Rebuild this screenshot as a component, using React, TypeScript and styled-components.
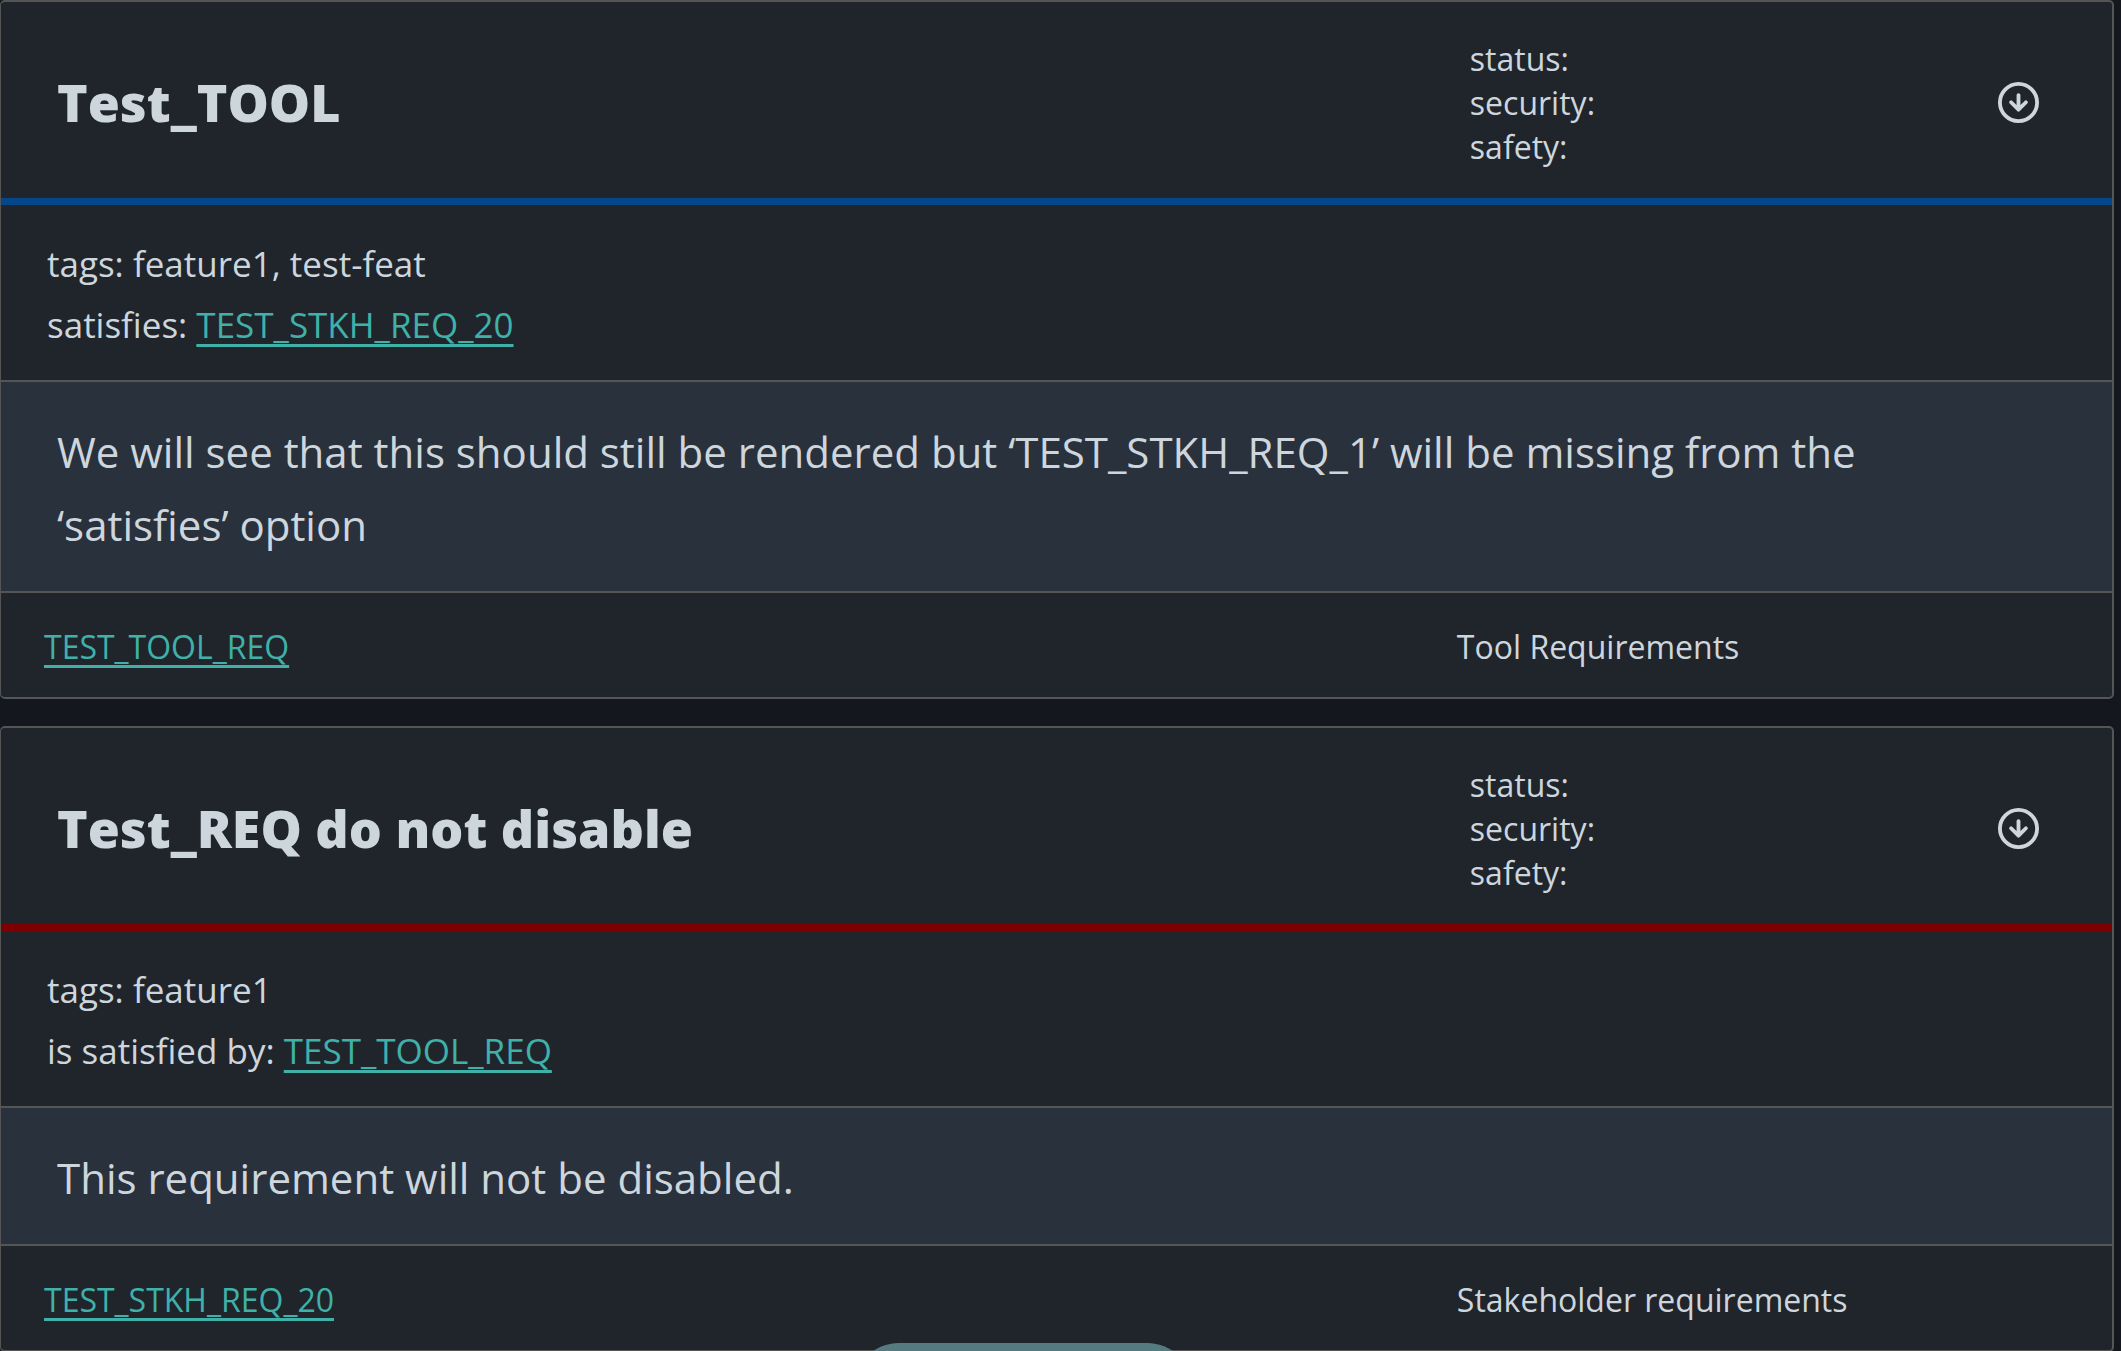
import React from "react";
import styled, { createGlobalStyle } from "styled-components";

const color = {
  page: "#14181e",
  card: "#20252c",
  surface: "#29313d",
  text: "#ced6dd",
  border: "#555555",
  link: "#3fb1a9",
  pill: "#557b81",
};

const GlobalStyle = createGlobalStyle`
  *, *::before, *::after { box-sizing: border-box; }
  body {
    margin: 0;
    overflow: hidden;
    background: ${color.page};
    color: ${color.text};
    font-family: "Segoe UI", "Open Sans", "Noto Sans", sans-serif;
  }
`;

const Page = styled.main`
  display: flex;
  flex-direction: column;
  gap: 27px;
  padding-right: 7px;
`;

const Card = styled.article`
  background: ${color.card};
  border: 2px solid ${color.border};
  border-left-width: 1px;
  border-radius: 5px;
  overflow: hidden;
`;

const Row = styled.div`
  display: grid;
  grid-template-columns: minmax(0, 20fr) minmax(0, 9fr);
  align-items: center;
`;

const Header = styled(Row)<{ $accent: string }>`
  height: 203px;
  padding-top: 5px;
  border-bottom: 7px solid ${(p) => p.$accent};
`;

const Title = styled.h2`
  margin: 0;
  padding: 0 56px 2px;
  font-size: 52px;
  line-height: 76px;
  font-weight: 800;
`;

const HeaderSide = styled.div`
  display: flex;
  align-items: center;
  justify-content: space-between;
  padding: 0 73px 0 13px;
`;

const States = styled.ul`
  margin: 0;
  padding: 0;
  list-style: none;
  font-size: 32px;
  line-height: 44px;
`;

const IconButton = styled.button`
  display: flex;
  padding: 0;
  border: 0;
  background: none;
  color: inherit;
  cursor: pointer;
`;

const Meta = styled.div`
  padding: 28px 46px 25px;
  border-bottom: 2px solid ${color.border};
  font-size: 35px;
  line-height: 61px;
`;

const Content = styled.p`
  margin: 0;
  padding: 33px 96px 30px 56px;
  border-bottom: 2px solid ${color.border};
  background: ${color.surface};
  font-size: 42px;
  line-height: 73px;
`;

const Footer = styled(Row)`
  height: 104px;
  padding-top: 4px;
  font-size: 32px;
  line-height: 44px;
`;

const FooterId = styled.div`
  padding: 0 43px;
`;

const Link = styled.a`
  color: ${color.link};
  text-decoration: underline;
  text-decoration-thickness: 3px;
  text-underline-offset: 6px;
  text-decoration-skip-ink: none;
`;

const BackToTop = styled.button`
  position: fixed;
  left: calc(50% - 208px);
  bottom: -84px;
  width: 340px;
  height: 92px;
  border: 0;
  border-radius: 46px;
  background: ${color.pill};
`;

function ArrowDownCircle() {
  return (
    <svg width="41" height="41" viewBox="0 0 16 16" fill="none" stroke="currentColor" strokeWidth="1.5" aria-hidden="true">
      <circle cx="8" cy="8" r="7.25" />
      <path d="M8 5.1v5.4M5.1 7.9 8 10.8l2.9-2.9" strokeLinecap="round" strokeLinejoin="round" />
    </svg>
  );
}

type Need = {
  id: string;
  title: string;
  accent: string;
  tags: string;
  relation: string;
  target: string;
  content: string;
  type: string;
};

const needs: Need[] = [
  {
    id: "TEST_TOOL_REQ",
    title: "Test_TOOL",
    accent: "#05478b",
    tags: "feature1, test-feat",
    relation: "satisfies",
    target: "TEST_STKH_REQ_20",
    content:
      "We will see that this should still be rendered but ‘TEST_STKH_REQ_1’ will be missing from the ‘satisfies’ option",
    type: "Tool Requirements",
  },
  {
    id: "TEST_STKH_REQ_20",
    title: "Test_REQ do not disable",
    accent: "#7d0000",
    tags: "feature1",
    relation: "is satisfied by",
    target: "TEST_TOOL_REQ",
    content: "This requirement will not be disabled.",
    type: "Stakeholder requirements",
  },
];

function NeedCard({ need }: { need: Need }) {
  return (
    <Card id={need.id}>
      <Header $accent={need.accent}>
        <Title>{need.title}</Title>
        <HeaderSide>
          <States>
            <li>status:</li>
            <li>security:</li>
            <li>safety:</li>
          </States>
          <IconButton type="button" aria-label="Toggle details">
            <ArrowDownCircle />
          </IconButton>
        </HeaderSide>
      </Header>
      <Meta>
        <div>tags: {need.tags}</div>
        <div>
          {need.relation}: <Link href={`#${need.target}`}>{need.target}</Link>
        </div>
      </Meta>
      <Content>{need.content}</Content>
      <Footer>
        <FooterId>
          <Link href={`#${need.id}`}>{need.id}</Link>
        </FooterId>
        <div>{need.type}</div>
      </Footer>
    </Card>
  );
}

export default function App() {
  return (
    <>
      <GlobalStyle />
      <Page>
        {needs.map((need) => (
          <NeedCard key={need.id} need={need} />
        ))}
      </Page>
      <BackToTop type="button" aria-label="Back to top" />
    </>
  );
}
